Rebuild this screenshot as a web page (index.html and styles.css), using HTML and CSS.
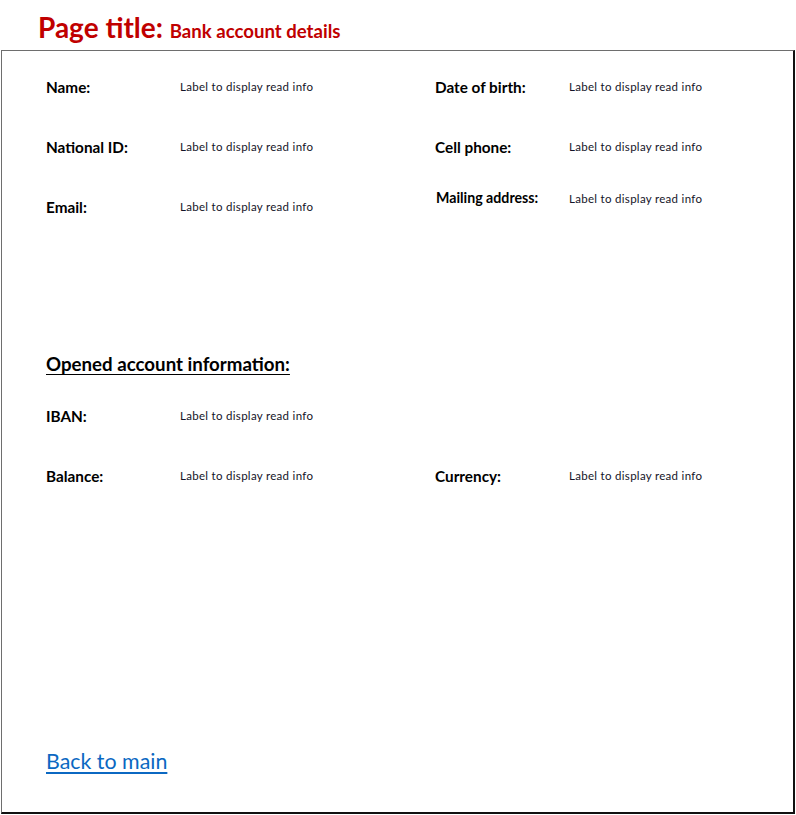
FILE: index.html
```html
<!DOCTYPE html>
<html lang="en">
<head>
<meta charset="utf-8">
<title>Bank account details</title>
<link rel="stylesheet" href="styles.css">
</head>
<body>
<header class="page-header">
  <h1 class="page-title">Page title: <span class="page-subtitle">Bank account details</span></h1>
</header>
<main class="panel">
  <section class="fields">
    <div class="field-label">Name:</div>
    <div class="field-value">Label to display read info</div>
    <div class="field-label">Date of birth:</div>
    <div class="field-value">Label to display read info</div>

    <div class="field-label">National ID:</div>
    <div class="field-value">Label to display read info</div>
    <div class="field-label">Cell phone:</div>
    <div class="field-value">Label to display read info</div>

    <div class="field-label">Email:</div>
    <div class="field-value">Label to display read info</div>
    <div class="field-label field-label--small field--top">Mailing address:</div>
    <div class="field-value field--top">Label to display read info</div>
  </section>

  <h2 class="section-title">Opened account information:</h2>

  <section class="fields fields--account">
    <div class="field-label">IBAN:</div>
    <div class="field-value">Label to display read info</div>
    <div></div>
    <div></div>

    <div class="field-label">Balance:</div>
    <div class="field-value">Label to display read info</div>
    <div class="field-label">Currency:</div>
    <div class="field-value">Label to display read info</div>
  </section>

  <a class="back-link" href="#">Back to main</a>
</main>
</body>
</html>
```

FILE: styles.css
```css
html, body {
  margin: 0;
  padding: 0;
  background: #ffffff;
}

body {
  font-family: Lato, "Open Sans", "Liberation Sans", sans-serif;
  color: #000;
  width: 796px;
}

.page-header {
  height: 50px;
  padding-left: 38px;
  box-sizing: border-box;
  display: flex;
  align-items: flex-end;
}

.page-title {
  margin: 0 0 3px 0;
  font-size: 28px;
  line-height: 32px;
  font-weight: 700;
  color: #c00000;
}

.page-subtitle {
  font-size: 18.6px;
}

.panel {
  margin-left: 1px;
  width: 794px;
  height: 764px;
  box-sizing: border-box;
  border-top: 1px solid #6e6e6e;
  border-left: 1px solid #6e6e6e;
  border-right: 2px solid #111;
  border-bottom: 2px solid #111;
  padding: 21px 0 0 44px;
  display: flex;
  flex-direction: column;
  align-items: flex-start;
}

.fields {
  display: grid;
  grid-template-columns: 134px 255px 134px 200px;
  grid-auto-rows: 30px;
  row-gap: 30px;
  align-items: center;
}

.field-label {
  font-size: 15.3px;
  font-weight: 700;
  line-height: 18px;
}

.field-label--small {
  font-size: 14.2px;
  padding-left: 1px;
}

.field--top {
  align-self: start;
  line-height: 12px;
}

.field-value {
  font-size: 11.5px;
  line-height: 14px;
  letter-spacing: 0.3px;
  color: #141428;
}

.section-title {
  margin: 130px 0 0 0;
  font-size: 18.7px;
  line-height: 24px;
  font-weight: 700;
  text-decoration: underline;
  text-underline-offset: 3px;
}

.fields--account {
  margin-top: 25px;
}

.back-link {
  margin-top: 256px;
  font-size: 21.4px;
  line-height: 28px;
  color: #0b68c2;
  text-decoration: underline;
  text-underline-offset: 3px;
}
```
